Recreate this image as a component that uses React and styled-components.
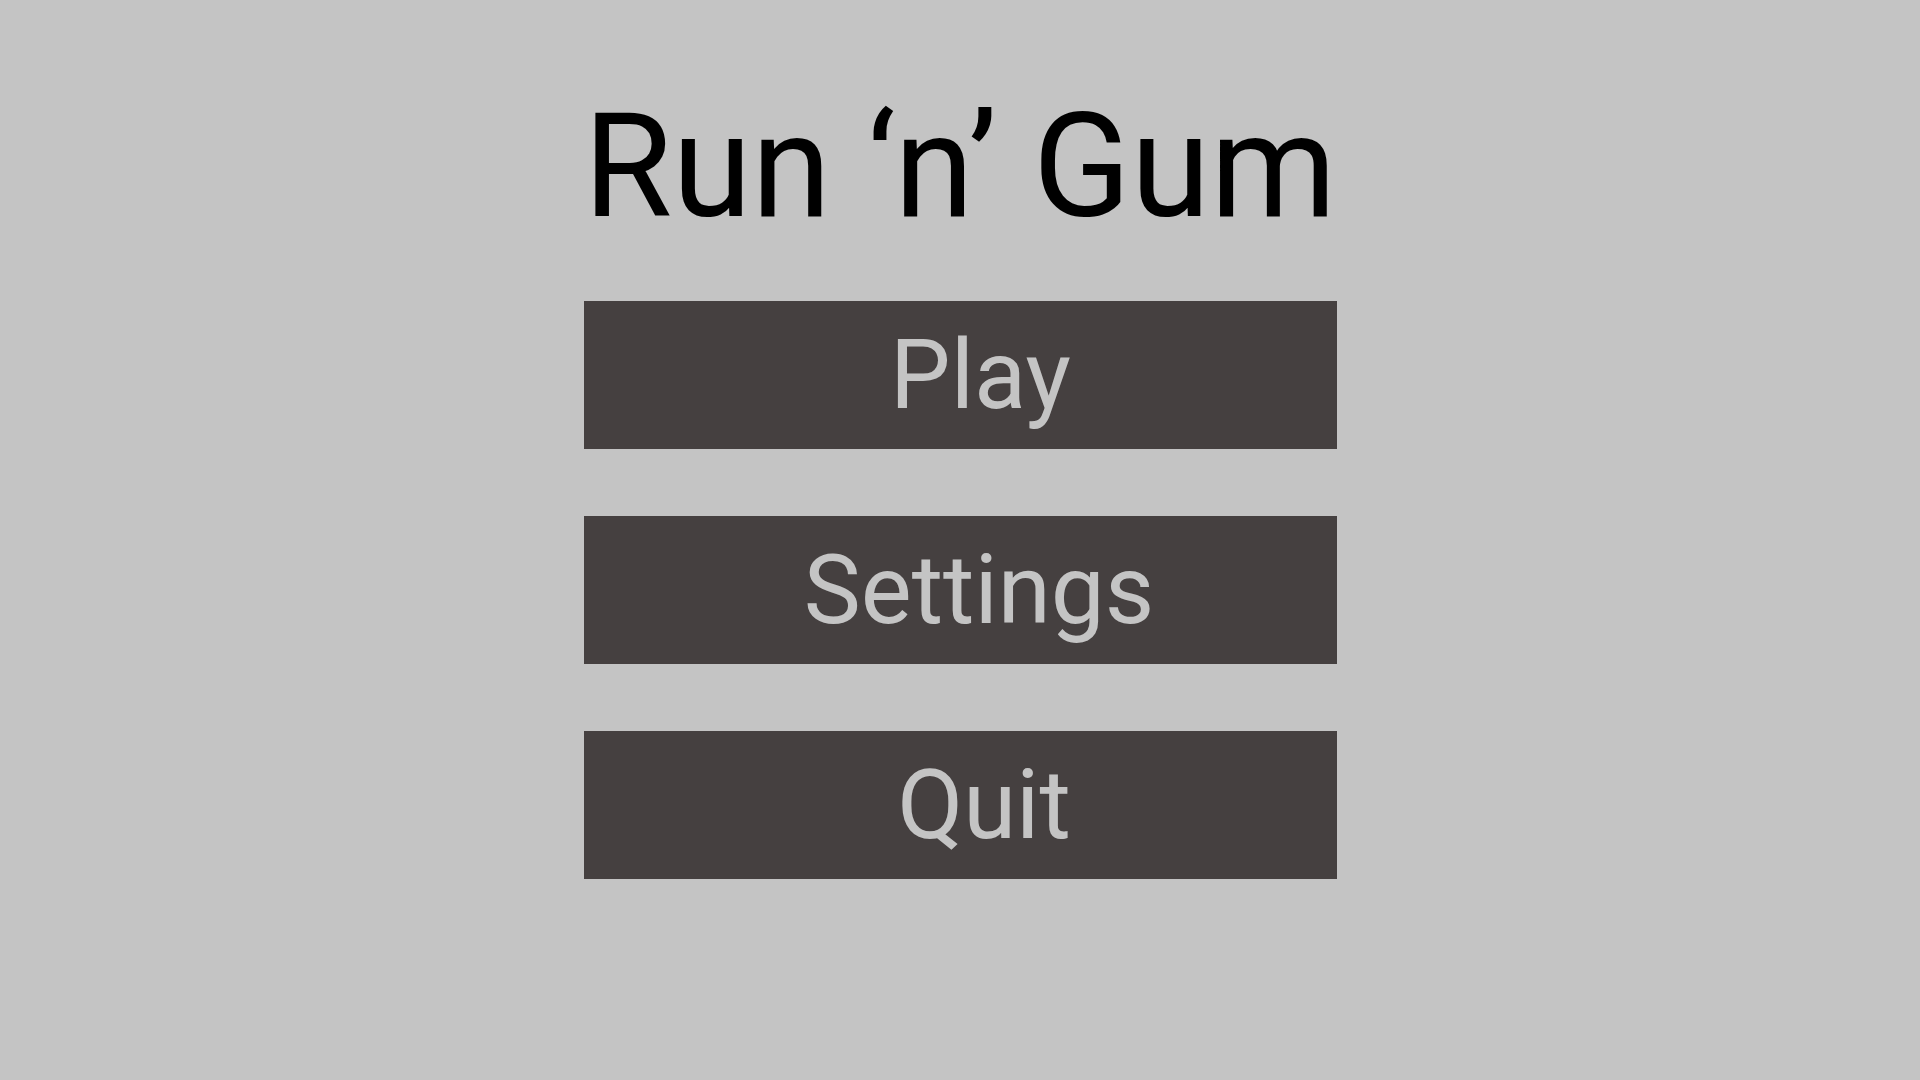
import React from "react";
import styled, { createGlobalStyle } from "styled-components";

const GlobalStyle = createGlobalStyle`
html, body {
margin: 0;
padding: 0;
background: #C4C4C4;
}
#root {
min-height: 100vh;
}`;

const Screen = styled.div`
width: 1920px;
height: 1080px;
background: #C4C4C4;
display: flex;
flex-direction: column;
align-items: center;
padding-top: 82px;
box-sizing: border-box;`;

const Title = styled.h1`
margin: 0 0 50px 0;
font-family: Roboto, "Liberation Sans", sans-serif;
font-weight: normal;
font-size: 144px;
line-height: 169px;
color: #000000;
white-space: nowrap;`;

const Menu = styled.div`
display: flex;
flex-direction: column;
gap: 67px;`;

const MenuButton = styled.button`
width: 753px;
height: 148px;
border: none;
border-radius: 0;
margin: 0;
padding: 0 0 0 ${ props => props.shift || '42px' };
background: #454040;
color: #C4C4C4;
font-family: Roboto, "Liberation Sans", sans-serif;
font-size: 96px;
line-height: 146px;
text-align: center;
cursor: pointer;`;

const App = () => {
    return (
        <React.Fragment>
            <GlobalStyle />
            <Screen>
                <Title>Run ‘n’ Gum</Title>
                <Menu>
                    <MenuButton shift="41px">Play</MenuButton>
                    <MenuButton shift="38px">Settings</MenuButton>
                    <MenuButton shift="48px">Quit</MenuButton>
                </Menu>
            </Screen>
        </React.Fragment>
    )
}

export default App;
